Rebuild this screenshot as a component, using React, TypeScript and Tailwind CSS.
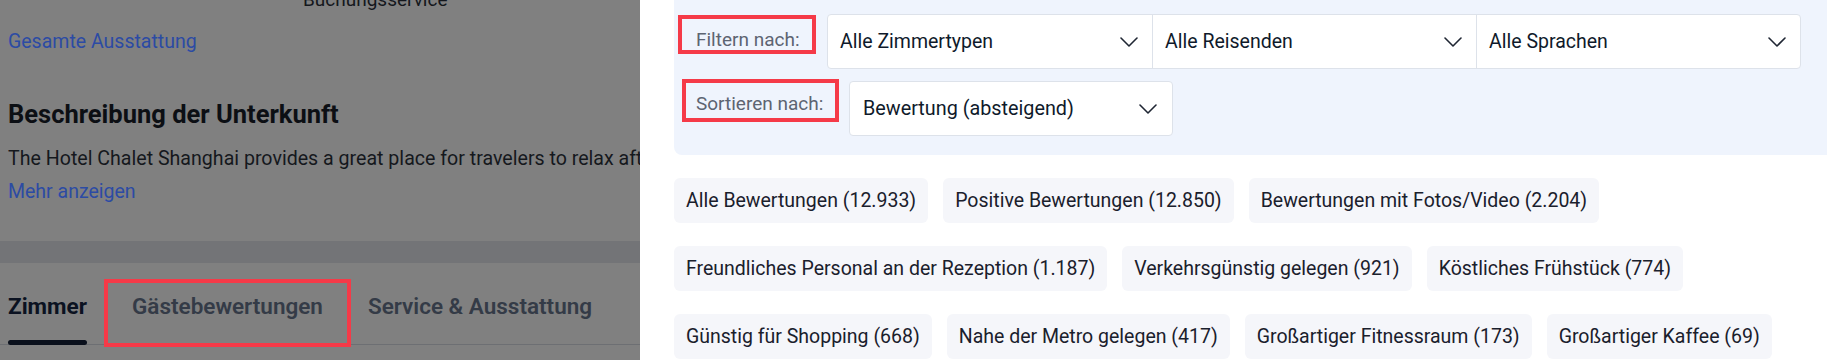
import React from 'react';

const chips: string[] = [
  "Alle Bewertungen (12.933)",
  "Positive Bewertungen (12.850)",
  "Bewertungen mit Fotos/Video (2.204)",
  "Freundliches Personal an der Rezeption (1.187)",
  "Verkehrsgünstig gelegen (921)",
  "Köstliches Frühstück (774)",
  "Günstig für Shopping (668)",
  "Nahe der Metro gelegen (417)",
  "Großartiger Fitnessraum (173)",
  "Großartiger Kaffee (69)",
];

const Chevron: React.FC = () => (
  <svg width="18" height="10" viewBox="0 0 18 10" fill="none" className="shrink-0">
    <polyline points="1,1 9,9 17,1" stroke="#1f2633" strokeWidth="1.6" strokeLinejoin="round" strokeLinecap="round" />
  </svg>
);

const SelectCell: React.FC<{ label: string; first?: boolean }> = ({ label, first }) => (
  <div
    className={
      "w-[324px] h-full flex items-center justify-between pl-[12px] pr-[14px] " +
      (first ? "" : "border-l border-[#dde2ea]")
    }
  >
    <span className="text-[19.5px] text-[#0f1a2b]">{label}</span>
    <Chevron />
  </div>
);

const LeftPane: React.FC = () => (
  <div className="w-[640px] shrink-0 h-[360px] overflow-hidden bg-[#808080]">
    <div className="-mt-[12px] ml-[303px] text-[19px] leading-[24px] text-[#14171c] whitespace-nowrap">
      Buchungsservice
    </div>
    <div className="mt-[16px] pl-[8px] text-[19.5px] leading-[28px] text-[#2c4ba4]">Gesamte Ausstattung</div>
    <h2 className="mt-[42px] pl-[8px] text-[25.5px] leading-[32px] font-bold text-[#0c0f14]">
      Beschreibung der Unterkunft
    </h2>
    <p className="mt-[15px] pl-[8px] text-[19.6px] leading-[28px] text-[#15181d] whitespace-nowrap">
      The Hotel Chalet Shanghai provides a great place for travelers to relax after a busy day of exploring the city.
    </p>
    <div className="mt-[5px] pl-[8px] text-[19.5px] leading-[28px] text-[#2c4ba4]">Mehr anzeigen</div>
    <div className="mt-[35px] h-[22px] bg-[#737477]" />
    <div className="h-[82px] flex items-start border-b border-[#6d6f73] pl-[8px]">
      <div className="mt-[28px] flex flex-col">
        <span className="text-[22.5px] leading-[30px] font-bold text-[#0b1221]">Zimmer</span>
        <div className="mt-[19px] h-[5px] rounded-full bg-[#0a101c]" />
      </div>
      <div className="ml-[17px] mt-[16px] border-4 border-[#f53a48] px-[24px] pt-[8px] pb-[22px]">
        <span className="text-[22.5px] leading-[30px] font-semibold text-[#343b47] whitespace-nowrap">
          Gästebewertungen
        </span>
      </div>
      <div className="ml-[17px] mt-[28px]">
        <span className="text-[22.5px] leading-[30px] font-semibold text-[#343b47] whitespace-nowrap">
          Service &amp; Ausstattung
        </span>
      </div>
    </div>
  </div>
);

const RightPane: React.FC = () => (
  <div className="flex-1 h-[360px] overflow-hidden bg-white pl-[34px]">
    <div className="bg-[#eff4fd] rounded-bl-lg pt-[14px] pb-[19px] pl-[4px]">
      <div className="flex items-start">
        <div className="mt-px w-[138px] h-[39px] border-4 border-[#f53a48] flex items-center pl-[14px] pt-[12px]">
          <span className="text-[19px] text-[#5d6472] whitespace-nowrap">Filtern nach:</span>
        </div>
        <div className="ml-[11px] h-[55px] flex bg-white border border-[#dde2ea] rounded-[4px]">
          <SelectCell label="Alle Zimmertypen" first />
          <SelectCell label="Alle Reisenden" />
          <SelectCell label="Alle Sprachen" />
        </div>
      </div>
      <div className="flex items-start mt-[10px] pl-[4px]">
        <div className="w-[157px] h-[43px] border-4 border-[#f53a48] flex items-center pl-[10px] pt-[8px]">
          <span className="text-[19px] text-[#5d6472] whitespace-nowrap">Sortieren nach:</span>
        </div>
        <div className="ml-[10px] mt-[2px] w-[324px] h-[55px] flex items-center justify-between bg-white border border-[#dde2ea] rounded-[4px] pl-[13px] pr-[15px]">
          <span className="text-[19.8px] text-[#0f1a2b]">Bewertung (absteigend)</span>
          <Chevron />
        </div>
      </div>
    </div>
    <div className="mt-[23px] flex flex-wrap gap-x-[15px] gap-y-[23px] pr-[30px]">
      {chips.map((c) => (
        <div
          key={c}
          className="h-[45px] px-[12px] flex items-center rounded-md bg-[#f5f6fa] text-[19.5px] text-[#1a202c] whitespace-nowrap"
        >
          {c}
        </div>
      ))}
    </div>
  </div>
);

const App: React.FC = () => {
  return (
    <div className="w-[1827px] h-[360px] flex overflow-hidden font-[Roboto,sans-serif]">
      <LeftPane />
      <RightPane />
    </div>
  );
};

export default App;
